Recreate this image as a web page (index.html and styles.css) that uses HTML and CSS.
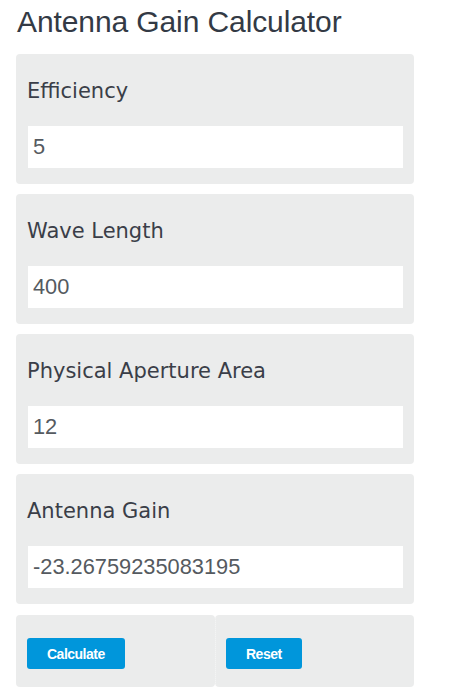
FILE: index.html
```html
<!DOCTYPE html>
<html lang="en">
<head>
    <meta charset="UTF-8">
    <meta name="viewport" content="width=device-width, initial-scale=1.0">
    <title>Antenna Gain Calculator</title>
    <link rel="stylesheet" href="styles.css">
</head>
<body>
    <div class="container">
        <h1>Antenna Gain Calculator</h1>

        <div class="field">
            <label for="efficiency">Efficiency</label>
            <input type="text" id="efficiency" value="5">
        </div>

        <div class="field">
            <label for="wavelength">Wave Length</label>
            <input type="text" id="wavelength" value="400">
        </div>

        <div class="field">
            <label for="area">Physical Aperture Area</label>
            <input type="text" id="area" value="12">
        </div>

        <div class="field">
            <label for="gain">Antenna Gain</label>
            <input type="text" id="gain" value="-23.26759235083195">
        </div>

        <div class="actions">
            <div class="cell"><button class="btn" id="calc">Calculate</button></div>
            <div class="cell"><button class="btn" id="reset">Reset</button></div>
        </div>
    </div>

    <script>
        document.getElementById('calc').addEventListener('click', function () {
            const eff = parseFloat(document.getElementById('efficiency').value);
            const wl = parseFloat(document.getElementById('wavelength').value);
            const area = parseFloat(document.getElementById('area').value);
            if (!isNaN(eff) && !isNaN(wl) && !isNaN(area)) {
                const g = 10 * Math.log10(4 * Math.PI * eff * area / (wl * wl));
                document.getElementById('gain').value = g;
            }
        });

        document.getElementById('reset').addEventListener('click', function () {
            document.querySelectorAll('.field input').forEach(function (i) { i.value = ''; });
        });
    </script>
</body>
</html>
```

FILE: styles.css
```css
body {
    margin: 0;
    background: #fff;
    font-family: 'DejaVu Sans', sans-serif;
}

.container {
    padding: 0 36px 10px 16px;
    width: 398px;
}

h1 {
    font-family: 'Liberation Sans', Arial, sans-serif;
    font-weight: normal;
    font-size: 30px;
    line-height: 34px;
    color: #333a45;
    margin: 5px 0 15px 1px;
    letter-spacing: -0.1px;
}

.field {
    background: #ebecec;
    border-radius: 4px;
    padding: 25px 11px 16px 12px;
    margin-bottom: 10px;
}

label {
    display: block;
    font-size: 21px;
    line-height: 24px;
    color: #3a3e48;
    margin: 0 0 23px -1px;
}

input {
    display: block;
    box-sizing: border-box;
    width: 100%;
    height: 42px;
    border: none;
    outline: none;
    background: #fff;
    padding: 0 5px;
    font-family: 'Liberation Sans', Arial, sans-serif;
    font-size: 21.8px;
    color: #555a60;
}

.actions {
    display: flex;
    margin-top: 11px;
}

.cell {
    flex: 1;
    background: #ebecec;
    border-radius: 4px;
    padding: 23px 11px 18px;
}

.cell + .cell {
    border-left: 1px dotted #f6f6f6;
    padding-left: 10px;
}

.btn {
    height: 31px;
    padding: 0 20px;
    border: none;
    border-radius: 3px;
    background: #0096db;
    color: #fff;
    font-family: 'Liberation Sans', Arial, sans-serif;
    font-weight: bold;
    font-size: 14px;
    letter-spacing: -0.5px;
    cursor: pointer;
}
```
